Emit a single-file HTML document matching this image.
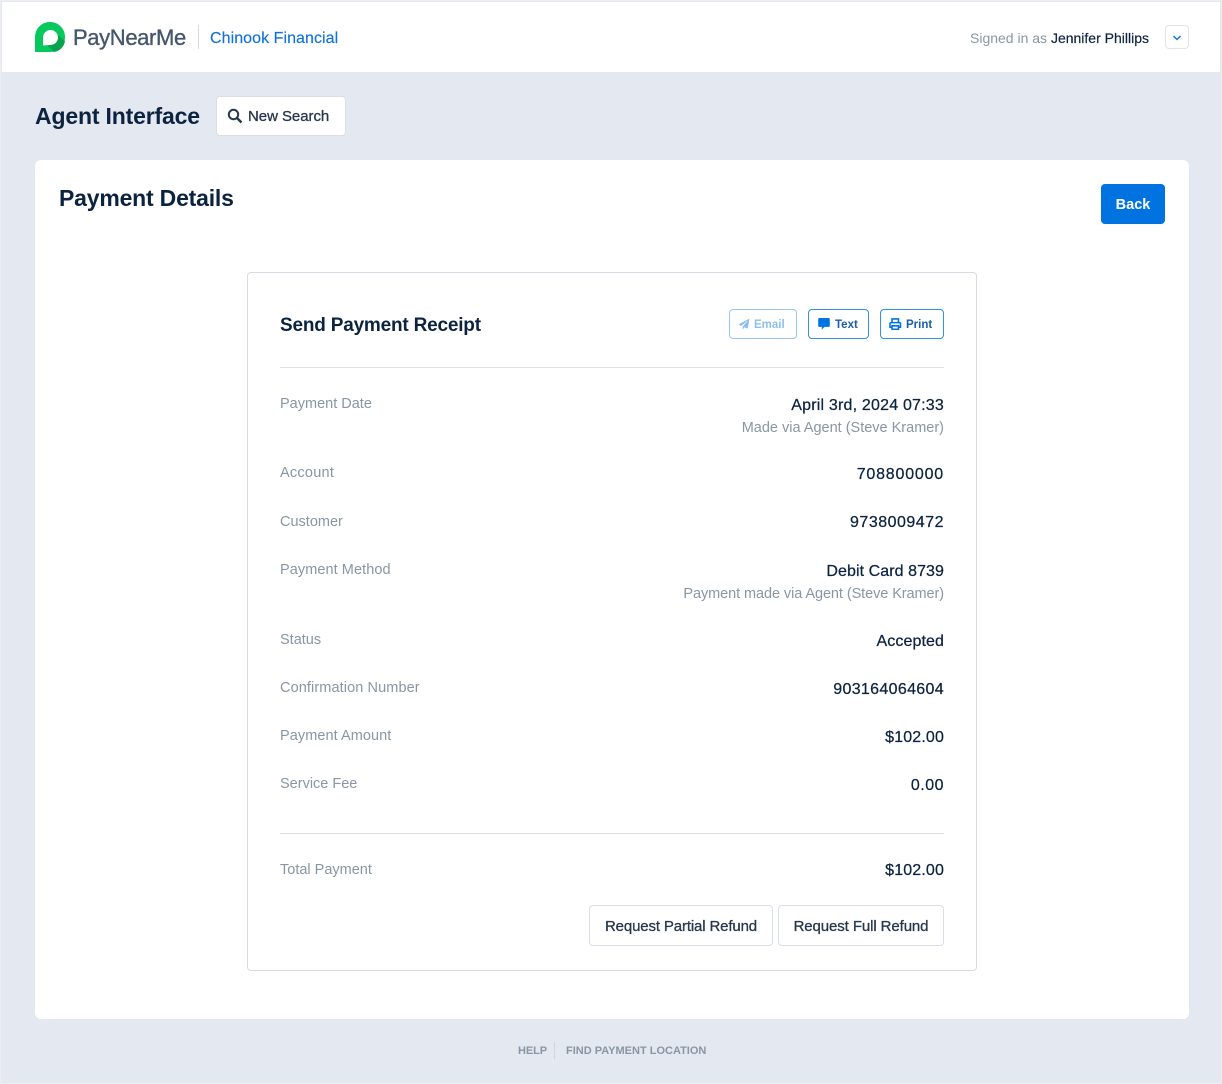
<!DOCTYPE html>
<html lang="en">
<head>
<meta charset="utf-8">
<title>Payment Details</title>
<style>
html,body{margin:0;padding:0;width:1222px;height:1084px;overflow:hidden;background:#e4e8f0;font-family:"Liberation Sans",sans-serif;}
#p{position:relative;width:1222px;height:1084px;overflow:hidden;}
.a{position:absolute;white-space:nowrap;}
.t{position:absolute;white-space:nowrap;line-height:20px;height:20px;}
.l{left:280px;font-size:14.5px;color:#8a96a3;}
.r{right:278px;text-align:right;font-size:16px;color:#0c2340;-webkit-text-stroke:.25px #0c2340;}
.s{right:278px;text-align:right;font-size:14.5px;color:#8a96a3;}
.b{position:absolute;box-sizing:border-box;background:#fff;border:1px solid #d9dee7;border-radius:4px;}
.sb{position:absolute;box-sizing:border-box;height:30px;top:309px;background:#fff;border:1px solid #0073e0;border-radius:4px;opacity:.8;}
.m{-webkit-text-stroke:.3px #27374d;color:#27374d;}
</style>
</head>
<body>
<div id="p">
<div class="a" style="left:0;top:0;width:1222px;height:1084px;box-sizing:border-box;border:1px solid #eceef1;z-index:5;pointer-events:none"></div>
<div class="a" style="left:2px;top:2px;width:1218px;height:70px;background:#fff"></div>

<svg class="a" style="left:35px;top:22px" width="31" height="30" viewBox="0 0 31 30">
<path d="M0 30V15C0 6.700 6.700 0 15 0s15 6.700 15 15-6.700 15-15 15z" fill="#05c95d"/>
<path d="M11 22l8 8c6-1 10-5 11-11l-7-6z" fill="#08a34c"/>
<path d="M8 23v-8a7.500 7.500 0 1 1 7.500 7.500z" fill="#fff" transform="translate(0 .5)"/>
</svg>
<div class="t" style="left:73px;top:26px;line-height:24px;height:24px;font-size:22px;color:#46566a;letter-spacing:-.37px;-webkit-text-stroke:.35px #46566a">PayNearMe</div>
<div class="a" style="left:198px;top:25px;width:1px;height:24px;background:#d5dbe3"></div>
<div class="t" style="left:210px;top:29px;font-size:16px;color:#0f73d8;letter-spacing:.06px;-webkit-text-stroke:.15px #0f73d8">Chinook Financial</div>
<div class="t" style="left:970px;top:28px;font-size:14px;color:#8a96a3;">Signed in as <span style="color:#0c2340;-webkit-text-stroke:.2px #0c2340">Jennifer Phillips</span></div>
<div class="b" style="left:1165px;top:25px;width:24px;height:24px;border-color:#e0e5ec"></div>
<svg class="a" style="left:1172px;top:34px" width="10" height="8" viewBox="0 0 10 8"><path d="M1.500 2L5 5.500 8.500 2" fill="none" stroke="#1277d8" stroke-width="1.500"/></svg>

<div class="t" style="left:35px;top:103px;line-height:26px;height:26px;font-size:23px;font-weight:bold;color:#0c2340;letter-spacing:-.17px">Agent Interface</div>
<div class="b" style="left:216px;top:96px;width:130px;height:40px;"></div>
<svg class="a" style="left:227px;top:108px" width="16" height="16" viewBox="0 0 16 16"><circle cx="6.500" cy="6.500" r="4.700" fill="none" stroke="#27374d" stroke-width="2"/><path d="M10 10l4.500 4.500" stroke="#27374d" stroke-width="2.400"/></svg>
<div class="t m" style="left:248px;top:107px;font-size:15px;letter-spacing:-.05px">New Search</div>

<div class="a" style="left:35px;top:160px;width:1154px;height:859px;background:#fff;border-radius:6px"></div>
<div class="t" style="left:59px;top:185px;line-height:26px;height:26px;font-size:23px;font-weight:bold;color:#0c2340;letter-spacing:-.2px">Payment Details</div>
<div class="a" style="left:1101px;top:184px;width:64px;height:40px;background:#0073e0;border-radius:4px;color:#fff;font-size:14.5px;font-weight:bold;text-align:center;line-height:42px">Back</div>

<div class="b" style="left:247px;top:272px;width:730px;height:699px;border-color:#d6dbe3"></div>
<div class="t" style="left:280px;top:316px;font-size:19px;font-weight:bold;color:#0c2340;letter-spacing:-.2px">Send Payment Receipt</div>

<div class="sb" style="left:729px;width:68px;opacity:.4"></div>
<svg class="a" style="left:738px;top:318px;opacity:.45" width="12" height="12" viewBox="0 0 13 13"><path d="M12.500.5L10.500 11.500 7 10 5 12.500V9.500L11 2.500 3.500 8.500.5 7z" fill="#0073e0"/></svg>
<div class="t" style="left:754px;top:315px;font-size:11.5px;font-weight:bold;color:#0073e0;opacity:.45">Email</div>

<div class="sb" style="left:808px;width:61px"></div>
<svg class="a" style="left:817.500px;top:317.500px" width="12" height="12.500" viewBox="0 0 13 14"><path d="M1.500 0h10A1.500 1.500 0 0 1 13 1.500v7A1.500 1.500 0 0 1 11.500 10H7l-3 3v-3H1.500A1.500 1.500 0 0 1 0 8.500v-7A1.500 1.500 0 0 1 1.500 0z" fill="#0073e0"/></svg>
<div class="t" style="left:835px;top:315px;font-size:11.5px;font-weight:bold;color:#1a5fa8;">Text</div>

<div class="sb" style="left:880px;width:64px"></div>
<svg class="a" style="left:889px;top:317.500px" width="12.500" height="12" viewBox="0 0 13 13"><path d="M3 5V1h7v4M3 10H.8V6A1.200 1.200 0 0 1 2 5h9a1.200 1.200 0 0 1 1.200 1v4H10M3 8.500h7v3.700H3z" fill="none" stroke="#0073e0" stroke-width="1.700"/></svg>
<div class="t" style="left:906px;top:315px;font-size:11.5px;font-weight:bold;color:#1a5fa8;">Print</div>

<div class="a" style="left:280px;top:367px;width:664px;height:1px;background:#dde1e7"></div>

<div class="t l" style="top:394px">Payment Date</div>
<div class="t r" style="top:396px;letter-spacing:.2px">April 3rd, 2024 07:33</div>
<div class="t s" style="top:418px">Made via Agent (Steve Kramer)</div>
<div class="t l" style="top:463px;letter-spacing:.25px">Account</div>
<div class="t r" style="top:465px;letter-spacing:.8px">708800000</div>
<div class="t l" style="top:512px">Customer</div>
<div class="t r" style="top:513px;letter-spacing:.5px">9738009472</div>
<div class="t l" style="top:560px;letter-spacing:.07px">Payment Method</div>
<div class="t r" style="top:562px;letter-spacing:.07px">Debit Card 8739</div>
<div class="t s" style="top:584px;letter-spacing:-.08px">Payment made via Agent (Steve Kramer)</div>
<div class="t l" style="top:630px">Status</div>
<div class="t r" style="top:632px;letter-spacing:.1px">Accepted</div>
<div class="t l" style="top:678px;letter-spacing:.1px">Confirmation Number</div>
<div class="t r" style="top:680px;letter-spacing:.33px">903164064604</div>
<div class="t l" style="top:726px;letter-spacing:.07px">Payment Amount</div>
<div class="t r" style="top:728px;letter-spacing:.14px">$102.00</div>
<div class="t l" style="top:774px">Service Fee</div>
<div class="t r" style="top:776px;letter-spacing:.5px">0.00</div>

<div class="a" style="left:280px;top:833px;width:664px;height:1px;background:#dde1e7"></div>
<div class="t l" style="top:860px">Total Payment</div>
<div class="t r" style="top:861px;letter-spacing:.14px">$102.00</div>

<div class="b" style="left:589px;top:905px;width:184px;height:41px;"></div>
<div class="t m" style="left:589px;width:184px;text-align:center;top:917px;font-size:15px;letter-spacing:-.14px">Request Partial Refund</div>
<div class="b" style="left:778px;top:905px;width:166px;height:41px;"></div>
<div class="t m" style="left:778px;width:166px;text-align:center;top:917px;font-size:15px;letter-spacing:-.1px">Request Full Refund</div>

<div class="t" style="left:518px;top:1041px;font-size:11px;font-weight:bold;color:#8a96a3;letter-spacing:-.1px">HELP</div>
<div class="a" style="left:554px;top:1042px;width:1px;height:17px;background:#d0d6df"></div>
<div class="t" style="left:566px;top:1041px;font-size:11px;font-weight:bold;color:#8a96a3;">FIND PAYMENT LOCATION</div>
</div>
</body>
</html>
